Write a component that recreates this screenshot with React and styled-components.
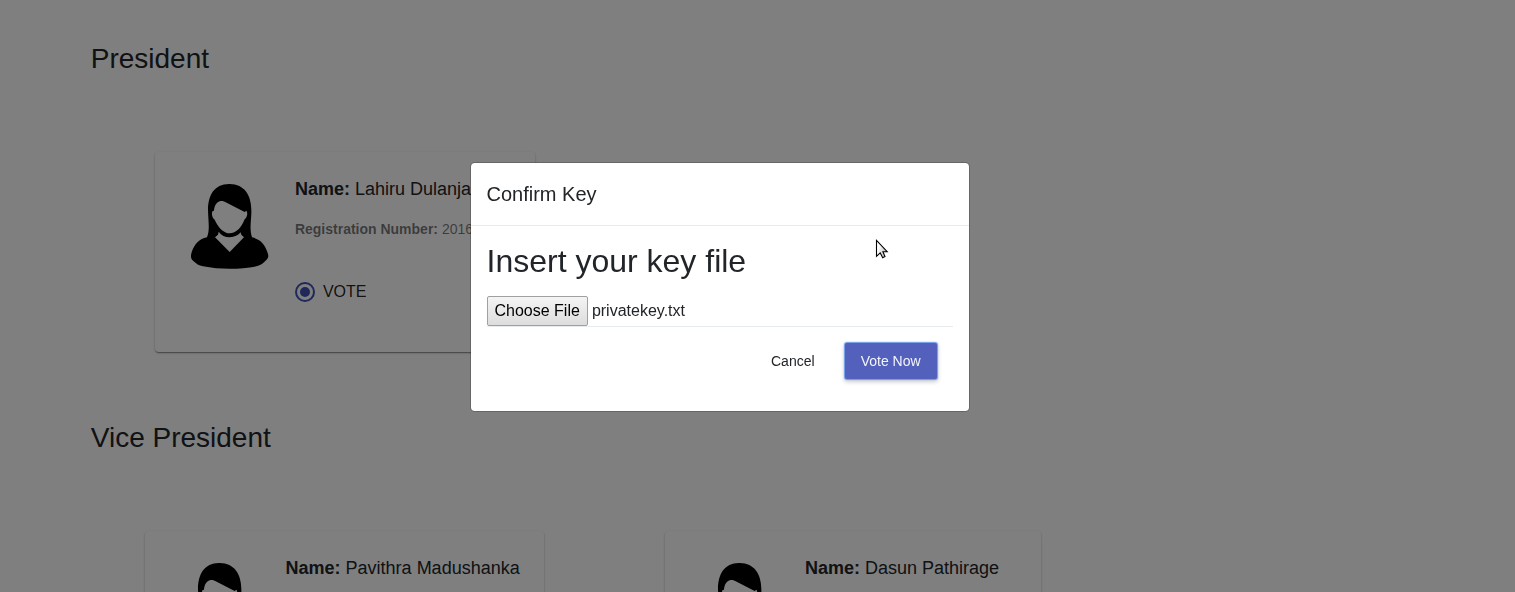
import React from "react";
import styled, { createGlobalStyle } from "styled-components";

const GlobalStyle = createGlobalStyle`
  *, *::before, *::after { box-sizing: border-box; }
  html, body, #root { height: 100%; }
  body {
    margin: 0;
    overflow: hidden;
    background: #fff;
    color: #212529;
    font-family: "Liberation Sans", Arial, sans-serif;
    font-size: 16px;
    line-height: 1.5;
  }
`;

const Page = styled.main`
  height: 592px;
  overflow: hidden;
  padding: 42px 0 0 90.75px;
`;

const Section = styled.section`
  height: 379px;
`;

const SectionTitle = styled.h3`
  margin: 0;
  height: 34px;
  font-size: 28px;
  font-weight: 400;
  line-height: 33.6px;
`;

const Candidates = styled.div`
  display: flex;
  gap: ${(p) => p.$gap || 0}px;
  padding: 76px 0 0 ${(p) => p.$indent}px;
`;

const Card = styled.article`
  display: flex;
  flex: none;
  width: ${(p) => p.$width}px;
  height: 200px;
  padding: 23px 0 0 25px;
  border-radius: 4px;
  background: #fff;
  box-shadow: 0 2px 1px -1px rgba(0, 0, 0, 0.2), 0 1px 1px 0 rgba(0, 0, 0, 0.18),
    0 1px 3px 0 rgba(0, 0, 0, 0.2);
`;

const AvatarSvg = styled.svg`
  flex: none;
  width: 100px;
  height: 100px;
`;

const Details = styled.div`
  padding-left: ${(p) => p.$inset}px;
  white-space: nowrap;
`;

const Name = styled.p`
  margin: 1px 0 0;
  font-size: 18px;
  line-height: 27px;
  color: #212529;
`;

const Registration = styled.p`
  margin: 16px 0 0;
  font-size: 14px;
  line-height: 20px;
  color: rgba(0, 0, 0, 0.54);
`;

const VoteOption = styled.label`
  display: flex;
  align-items: center;
  gap: 8px;
  height: 24px;
  margin-top: 41px;
  color: rgba(0, 0, 0, 0.87);
`;

const Radio = styled.span`
  display: grid;
  place-items: center;
  width: 20px;
  height: 20px;
  border: 2px solid #3f51b5;
  border-radius: 50%;

  &::after {
    content: "";
    width: 10px;
    height: 10px;
    border-radius: 50%;
    background: #3f51b5;
  }
`;

const Backdrop = styled.div`
  position: fixed;
  inset: 0;
  display: flex;
  align-items: flex-start;
  padding: 162px 0 0 470px;
  background: rgba(0, 0, 0, 0.5);
`;

const Dialog = styled.div`
  width: 500px;
  height: 250px;
  border: 1px solid rgba(0, 0, 0, 0.2);
  border-radius: 4.8px;
  background: #fff;
  background-clip: padding-box;
`;

const DialogHeader = styled.header`
  height: 63px;
  padding: 16px 16px 0 15.5px;
  border-bottom: 1px solid #e9ecef;
  font-size: 20px;
  line-height: 30px;
`;

const DialogBody = styled.div`
  padding: 16px 16px 0 15.5px;
`;

const Prompt = styled.h2`
  margin: 0;
  font-size: 32px;
  font-weight: 400;
  line-height: 38px;
`;

const FileField = styled.div`
  display: flex;
  align-items: center;
  gap: 4px;
  height: 30px;
  margin-top: 16px;
`;

const FileButton = styled.button`
  width: 101.4px;
  height: 30px;
  padding: 0;
  border: 1px solid #a0a0a0;
  border-radius: 2px;
  background: linear-gradient(#f4f4f4, #dddddd);
  color: #000;
  font: inherit;
`;

const Actions = styled.div`
  display: flex;
  justify-content: flex-end;
  padding: 16px 16.4px 16px 16px;
  gap: 14.1px;
  border-top: 1px solid #e9ecef;
`;

const ActionButton = styled.button`
  height: 36px;
  padding: 0 16px;
  border: 0;
  border-radius: 2px;
  font: 14px/36px "Liberation Sans", Arial, sans-serif;
  color: ${(p) => (p.$primary ? "rgba(255, 255, 255, 0.93)" : "#212529")};
  background: ${(p) => (p.$primary ? "#5361bc" : "transparent")};
  box-shadow: ${(p) =>
    p.$primary
      ? "0 0 1px 1px #6c9bea, 0 2px 4px 1px rgba(0, 0, 0, 0.2)"
      : "none"};
`;

const Cursor = styled.svg`
  position: fixed;
  left: 875px;
  top: 238px;
  width: 14px;
  height: 22px;
`;

function Avatar() {
  return (
    <AvatarSvg viewBox="0 0 300 300" aria-hidden="true">
      <path
        fillRule="evenodd"
        d="M149 27C103 26 84 61 84 106C85 142 90 164 81 187C58 191 43 208 35 232C31 245 33 253 40 258C49 266 56 272 69 274C119 284 180 284 229 274C243 271 250 265 258 256C267 247 266 242 262 231C253 205 241 193 216 187C207 159 215 134 214 104C213 60 194 28 149 27ZM102 107C103 91 111 79 123 78C130 78 134 80 140 83L194 111L199 107C204 113 202 127 194 133C184 159 168 175 149 175C131 175 114 157 104 134C95 128 94 113 98 108ZM116 170C124 181 135 187 149 187C164 187 175 180 182 172L184 179L192 187L149 231L105 187L114 179Z"
      />
    </AvatarSvg>
  );
}

function Candidate({ name, registration, width, inset = 15 }) {
  return (
    <Card $width={width}>
      <Avatar />
      <Details $inset={inset}>
        <Name>
          <b>Name:</b> {name}
        </Name>
        {registration && (
          <>
            <Registration>
              <b>Registration Number:</b> {registration}
            </Registration>
            <VoteOption>
              <Radio />
              VOTE
            </VoteOption>
          </>
        )}
      </Details>
    </Card>
  );
}

export default function App() {
  return (
    <>
      <GlobalStyle />
      <Page>
        <Section>
          <SectionTitle>President</SectionTitle>
          <Candidates $indent={64}>
            <Candidate name="Lahiru Dulanja" registration="2016" width={380} inset={15.15} />
          </Candidates>
        </Section>
        <Section>
          <SectionTitle>Vice President</SectionTitle>
          <Candidates $indent={54} $gap={121}>
            <Candidate name="Pavithra Madushanka" width={399} inset={15.8} />
            <Candidate name="Dasun Pathirage" width={376} inset={15.25} />
          </Candidates>
        </Section>
      </Page>
      <Backdrop>
        <Dialog role="dialog" aria-modal="true">
          <DialogHeader>Confirm Key</DialogHeader>
          <DialogBody>
            <Prompt>Insert your key file</Prompt>
            <FileField>
              <FileButton>Choose File</FileButton>
              <span>privatekey.txt</span>
            </FileField>
            <Actions>
              <ActionButton>Cancel</ActionButton>
              <ActionButton $primary>Vote Now</ActionButton>
            </Actions>
          </DialogBody>
        </Dialog>
      </Backdrop>
      <Cursor viewBox="0 0 14 22">
        <defs>
          <linearGradient id="pointer" x1="0" y1="0" x2="1" y2="0.4">
            <stop offset="0.3" stopColor="#fff" />
            <stop offset="1" stopColor="#bbb" />
          </linearGradient>
        </defs>
        <path
          d="M1.5 2.3V18.3L5.2 14.9L7.7 19.7L10 18.6L7.9 13.7H12.2Z"
          fill="url(#pointer)"
          stroke="#000"
          strokeWidth="1.1"
        />
      </Cursor>
    </>
  );
}
